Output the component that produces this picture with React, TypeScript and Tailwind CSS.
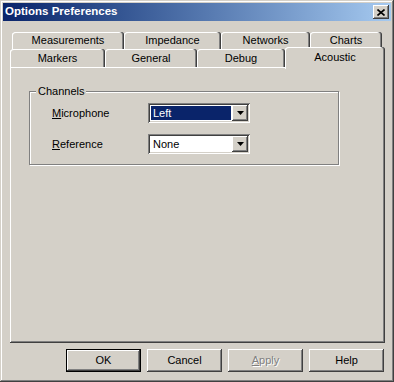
import React from 'react';

const raised =
  'shadow-[inset_-1px_-1px_#404040,inset_1px_1px_#ffffff,inset_-2px_-2px_#808080,inset_2px_2px_#d4d0c8]';

const tabShadow = 'shadow-[inset_-1px_0_#404040,inset_-2px_0_#808080,inset_1px_1px_#ffffff]';

function Tab({ label, width }: { label: string; width: string }) {
  return (
    <div className={`${width} h-full flex items-center justify-center rounded-t-[3px] bg-[#d4d0c8] ${tabShadow}`}>
      {label}
    </div>
  );
}

function Arrow() {
  return (
    <svg width="7" height="4" viewBox="0 0 7 4">
      <path d="M0 0h7L3.5 4z" fill="#000" />
    </svg>
  );
}

function Combo({ value, selected }: { value: string; selected?: boolean }) {
  return (
    <div className="w-[102px] h-[20px] bg-white flex p-[2px] shadow-[inset_1px_1px_#808080,inset_-1px_-1px_#ffffff,inset_2px_2px_#404040,inset_-2px_-2px_#d4d0c8]">
      <div
        className={`flex-1 flex items-center pl-[2px] m-[1px] ${selected ? 'bg-[#0a246a] text-white' : 'text-black'}`}
      >
        {value}
      </div>
      <div className={`w-[16px] h-full bg-[#d4d0c8] flex items-center justify-center ${raised}`}>
        <Arrow />
      </div>
    </div>
  );
}

function Button({ children, isDefault, disabled }: { children: React.ReactNode; isDefault?: boolean; disabled?: boolean }) {
  return (
    <div
      className={`w-[75px] h-[23px] flex items-center justify-center bg-[#d4d0c8] ${
        isDefault ? 'border border-black' : ''
      }`}
    >
      <div
        className={`w-full h-full flex items-center justify-center ${raised} ${
          disabled ? 'text-[#808080] [text-shadow:1px_1px_#ffffff]' : 'text-black'
        }`}
      >
        {children}
      </div>
    </div>
  );
}

export default function App() {
  return (
    <div
      className="w-[394px] h-[382px] bg-[#d4d0c8] p-[3px] flex flex-col text-[11px] text-black shadow-[inset_-1px_-1px_#404040,inset_1px_1px_#d4d0c8,inset_-2px_-2px_#808080,inset_2px_2px_#ffffff] select-none"
      style={{ fontFamily: '"Liberation Sans", Arial, sans-serif' }}
    >
      {/* Title bar */}
      <div className="h-[18px] bg-linear-to-r from-[#0a246a] to-[#a6caf0] flex items-center justify-between pl-[2px] pr-[2px]">
        <span className="text-white font-bold text-[11.5px] leading-none">Options Preferences</span>
        <div className={`w-[16px] h-[14px] bg-[#d4d0c8] flex items-center justify-center ${raised}`}>
          <svg width="8" height="7" viewBox="0 0 8 7">
            <path d="M0.5 0.5L7.5 6.5M7.5 0.5L0.5 6.5" stroke="#000" strokeWidth="1.6" />
          </svg>
        </div>
      </div>

      {/* Body */}
      <div className="flex-1 flex flex-col pl-[7px] pt-[11px]">
        {/* Tabs */}
        <div className="w-[375px] h-[35px] flex flex-col">
          <div className="flex h-[17px] ml-[2px]">
            <Tab label="Measurements" width="w-[112px]" />
            <Tab label="Impedance" width="w-[97px]" />
            <Tab label="Networks" width="w-[89px]" />
            <Tab label="Charts" width="w-[72px]" />
          </div>
          <div className="flex h-[18px]">
            <Tab label="Markers" width="w-[95px]" />
            <Tab label="General" width="w-[92px]" />
            <Tab label="Debug" width="w-[88px]" />
            <div
              className={`relative z-10 w-[100px] h-[22px] -mt-[2px] flex items-start justify-center pt-[2px] rounded-t-[3px] bg-[#d4d0c8] ${tabShadow}`}
            >
              Acoustic
            </div>
          </div>
        </div>

        {/* Panel */}
        <div className="w-[375px] h-[276px] pt-[24px] pl-[19px] shadow-[inset_-1px_-1px_#404040,inset_1px_1px_#ffffff,inset_-2px_-2px_#808080]">
          <div className="relative w-[310px] h-[74px] border border-[#808080] shadow-[inset_1px_1px_#ffffff,1px_1px_#ffffff]">
            <span className="absolute -top-[8px] left-[6px] px-[2px] bg-[#d4d0c8] leading-[14px]">Channels</span>
            <div className="flex flex-col gap-[11px] pt-[11px] pl-[22px]">
              <div className="flex items-center h-[20px]">
                <span className="w-[96px]">
                  <span className="underline">M</span>icrophone
                </span>
                <Combo value="Left" selected />
              </div>
              <div className="flex items-center h-[20px]">
                <span className="w-[96px]">
                  <span className="underline">R</span>eference
                </span>
                <Combo value="None" />
              </div>
            </div>
          </div>
        </div>

        {/* Buttons */}
        <div className="flex justify-end gap-[6px] mt-[6px] pr-[7px]">
          <Button isDefault>OK</Button>
          <Button>Cancel</Button>
          <Button disabled>
            <span>
              <span className="underline">A</span>pply
            </span>
          </Button>
          <Button>Help</Button>
        </div>
      </div>
    </div>
  );
}
